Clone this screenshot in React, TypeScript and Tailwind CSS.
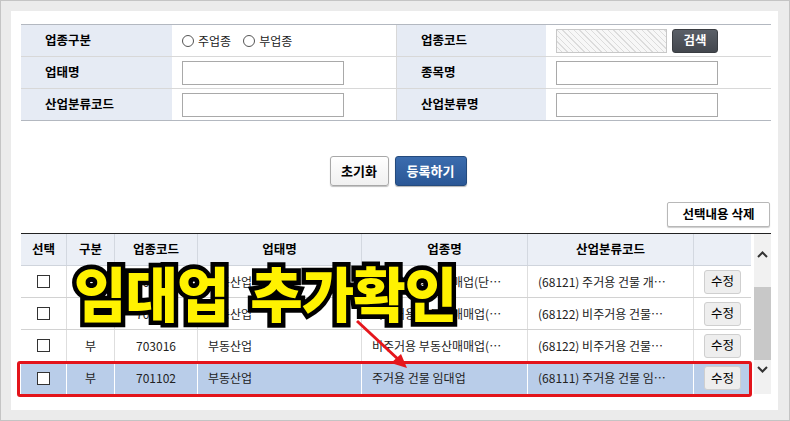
import React from "react";

const rows = [
  { gubun: "부", code: "703011", name: "부동산업", biz: "주거용 부동산매매업(단…", ind: "(68121) 주거용 건물 개…", hl: false },
  { gubun: "부", code: "703012", name: "부동산업", biz: "비주거용 부동산매매업(…", ind: "(68122) 비주거용 건물…", hl: false },
  { gubun: "부", code: "703016", name: "부동산업", biz: "비주거용 부동산매매업(…", ind: "(68122) 비주거용 건물…", hl: false },
  { gubun: "부", code: "701102", name: "부동산업", biz: "주거용 건물 임대업", ind: "(68111) 주거용 건물 임…", hl: true },
];

function Radio({ label }: { label: string }) {
  return (
    <span className="flex items-center gap-[4px]">
      <span className="w-[12px] h-[12px] rounded-full border border-[#555] bg-white" />
      <span className="text-[12px] text-[#222]">{label}</span>
    </span>
  );
}

function Label({ children }: { children: React.ReactNode }) {
  return (
    <div className="bg-[#e6ebf4] flex items-center pl-[24px] text-[12.5px] font-bold text-black">{children}</div>
  );
}

function Input({ w = "w-[162px]" }: { w?: string }) {
  return <div className={`${w} h-[24px] border border-[#a9a9a9] bg-white`} />;
}

export default function App() {
  return (
    <div className="w-[790px] h-[421px] bg-[#ebebeb] border border-[#c4c4c4] pt-[10px] pl-[10px] pr-[11px] pb-[10px] font-['Noto_Sans_CJK_KR','Noto_Sans',sans-serif] text-[#222] overflow-hidden">
      <div className="relative bg-white h-full pt-[13px] pl-[10px] pr-[7px]">
        {/* form */}
        <div className="border-t border-[#b3b8c0] border-b border-b-[#b3b8c0]">
          <div className="grid grid-cols-[151px_225px_149px_225px] h-[32px] border-b border-[#d8d8d8]">
            <Label>업종구분</Label>
            <div className="flex items-center pl-[10px] gap-[12px] border-r border-[#d8d8d8]">
              <Radio label="주업종" />
              <Radio label="부업종" />
            </div>
            <Label>업종코드</Label>
            <div className="flex items-center pl-[10px] gap-[5px]">
              <div className="w-[111px] h-[24px] border border-[#c8c8c8] bg-[repeating-linear-gradient(45deg,#f7f7f7_0px,#f7f7f7_3px,#dcdcdc_3px,#dcdcdc_4px)]" />
              <div className="w-[46px] h-[24px] rounded-[3px] bg-[linear-gradient(#5a5f67,#43474e)] border border-[#3a3d42] flex items-center justify-center text-white text-[12.5px] font-bold">검색</div>
            </div>
          </div>
          <div className="grid grid-cols-[151px_225px_149px_225px] h-[32px] border-b border-[#d8d8d8]">
            <Label>업태명</Label>
            <div className="flex items-center pl-[10px] border-r border-[#d8d8d8]"><Input /></div>
            <Label>종목명</Label>
            <div className="flex items-center pl-[10px]"><Input /></div>
          </div>
          <div className="grid grid-cols-[151px_225px_149px_225px] h-[31px]">
            <Label>산업분류코드</Label>
            <div className="flex items-center pl-[10px] border-r border-[#d8d8d8]"><Input /></div>
            <Label>산업분류명</Label>
            <div className="flex items-center pl-[10px]"><Input /></div>
          </div>
        </div>

        {/* buttons */}
        <div className="flex justify-center gap-[6px] mt-[35px] pl-[4px]">
          <div className="w-[59px] h-[30px] rounded-[3px] border border-[#a8a8a8] bg-[linear-gradient(#ffffff,#f0f0f0)] shadow-[0_1px_1px_rgba(0,0,0,0.25)] flex items-center justify-center text-[13px] font-bold text-black">초기화</div>
          <div className="w-[72px] h-[30px] rounded-[3px] border border-[#244a7c] bg-[linear-gradient(#3b6cae,#2a5796)] shadow-[0_1px_1px_rgba(0,0,0,0.3)] flex items-center justify-center text-[13px] font-bold text-white">등록하기</div>
        </div>

        <div className="flex justify-end mt-[16px] pr-[1px]">
          <div className="w-[103px] h-[25px] border border-[#b8b8b8] rounded-[2px] bg-white shadow-[0_1px_1px_rgba(0,0,0,0.2)] flex items-center justify-center text-[12.5px] font-bold text-black">선택내용 삭제</div>
        </div>

        {/* table */}
        <div className="mt-[6px] border-t border-[#222] flex">
          <div className="w-[730px]">
            <div className="grid grid-cols-[46px_48px_83px_164px_166px_166px_57px] h-[32px] bg-[#ebeff6] border-b border-[#cfd4dc] text-[12.5px] font-bold text-black">
              {["선택", "구분", "업종코드", "업태명", "업종명", "산업분류코드", ""].map((h, i) => (
                <div key={i} className={`flex items-center justify-center ${i < 6 ? "border-r border-[#d3d8e0]" : ""}`}>{h}</div>
              ))}
            </div>
            {rows.map((r, i) => (
              <div
                key={i}
                className={`grid grid-cols-[46px_48px_83px_164px_166px_166px_57px] h-[32px] text-[12px] ${r.hl ? "bg-[#b9cde9]" : "bg-white border-b border-[#d2d2d2]"}`}
              >
                <div className={`flex items-center justify-center border-r ${r.hl ? "border-white" : "border-[#dedede]"}`}>
                  <span className="w-[13px] h-[13px] border border-[#333] bg-white" />
                </div>
                <div className={`flex items-center justify-center border-r ${r.hl ? "border-white" : "border-[#dedede]"}`}>{r.gubun}</div>
                <div className={`flex items-center justify-center border-r ${r.hl ? "border-white" : "border-[#dedede]"}`}>{r.code}</div>
                <div className={`flex items-center pl-[10px] border-r ${r.hl ? "border-white" : "border-[#dedede]"}`}>{r.name}</div>
                <div className={`flex items-center pl-[10px] whitespace-nowrap overflow-hidden border-r ${r.hl ? "border-white" : "border-[#dedede]"}`}>{r.biz}</div>
                <div className={`flex items-center pl-[10px] whitespace-nowrap overflow-hidden border-r ${r.hl ? "border-white" : "border-[#dedede]"}`}>{r.ind}</div>
                <div className="flex items-center justify-center">
                  <span className="w-[37px] h-[24px] rounded-[3px] border border-[#cfcfcf] bg-[#eeeeee] flex items-center justify-center text-[12.5px] text-black">수정</span>
                </div>
              </div>
            ))}
          </div>
          {/* scrollbar */}
          <div className="w-[20px] h-[160px] flex flex-col pl-[3px]">
            <div className="h-[32px] flex items-end justify-center pb-[8px] bg-[#f1f1f1]">
              <svg width="11" height="7" viewBox="0 0 11 7"><path d="M1 6 L5.5 1.5 L10 6" stroke="#333" strokeWidth="2" fill="none" /></svg>
            </div>
            <div className="h-[21px] bg-[#f1f1f1]" />
            <div className="h-[73px] bg-[#c8c8c8]" />
            <div className="flex-1 flex items-start justify-center pt-[6px] bg-[#f1f1f1]">
              <svg width="11" height="7" viewBox="0 0 11 7"><path d="M1 1 L5.5 5.5 L10 1" stroke="#333" strokeWidth="2" fill="none" /></svg>
            </div>
          </div>
        </div>

        {/* red highlight box */}
        <div className="absolute left-[6px] top-[350px] w-[735px] h-[36px] border-[3px] border-[#e3141b] rounded-[3px]" />

        {/* arrow */}
        <svg className="absolute inset-0 w-full h-full pointer-events-none" viewBox="0 0 767 399">
          <line x1="346" y1="310" x2="389" y2="350" stroke="#e5161c" strokeWidth="3" />
          <polygon points="396,357 380,352 390,343" fill="#e5161c" />
        </svg>

        {/* big overlay text */}
        <div className="absolute left-[63px] top-[251px] flex gap-[22px] text-[57px] leading-none font-black tracking-[-1px] scale-y-[1.04] origin-top">
          {["임대업", "추가확인"].map((t, i) => (
            <span key={i} className="relative inline-block">
              <span className="absolute inset-0 text-black [-webkit-text-stroke:9px_#000]">{t}</span>
              <span className="relative text-[#fff200]">{t}</span>
            </span>
          ))}
        </div>
      </div>
    </div>
  );
}
